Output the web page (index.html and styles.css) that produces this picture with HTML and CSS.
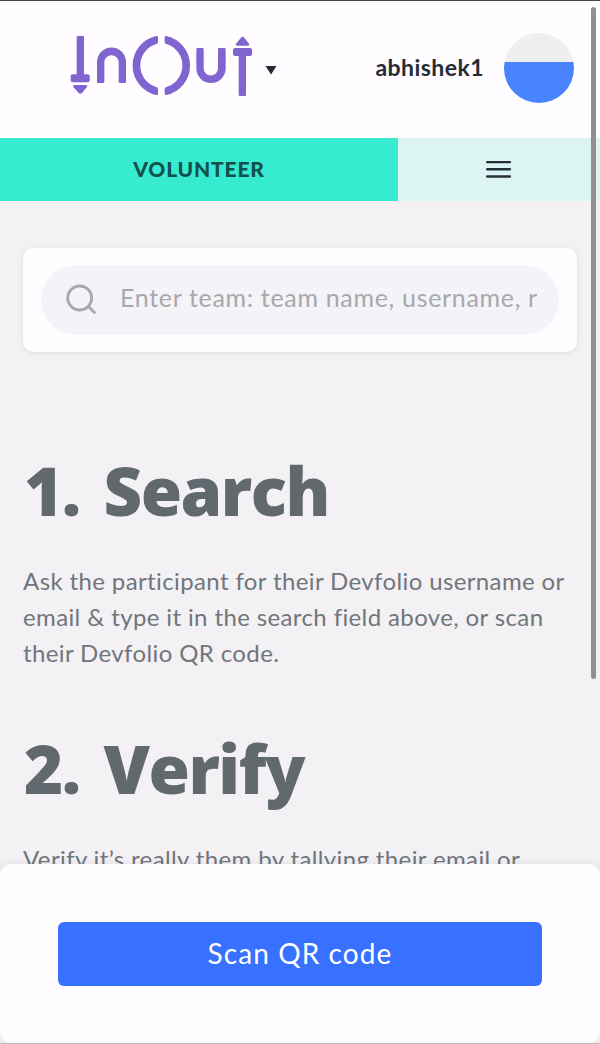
FILE: index.html
```html
<!DOCTYPE html>
<html lang="en">
<head>
<meta charset="utf-8">
<title>InOut – Volunteer</title>
<link rel="stylesheet" href="styles.css">
</head>
<body>
<div class="app">
  <header class="header">
    <div class="brand">
      <svg class="logo" viewBox="30 30 552 186" aria-label="InOut">
        <g fill="#8064cf">
          <rect x="50" y="33" width="22" height="121" rx="4"/>
          <rect x="32" y="148" width="57" height="24" rx="6"/>
          <path d="M43 180h35q6 1 3 6L66 204q-5 5-10 0L40 186q-3-5 3-6z"/>
          <path d="M111 170v-59a43 43 0 0 1 87 0v59q0 4-4 4h-14q-4 0-4-4v-58a21 21 0 0 0-43 0v58q0 4-4 4h-14q-4 0-4-4z"/>
          <path d="M294 37v14q0 5-5 6a67.3 67.3 0 0 0 0 129q5 1 5 6v14q0 5-5 4a90.6 90.6 0 0 1 0-177q5-1 5 4z"/>
          <path d="M314 37v14q0 5 5 6a67.3 67.3 0 0 1 0 129q-5 1-5 6v14q0 5 5 4a90.6 90.6 0 0 0 0-177q-5-1-5 4z"/>
          <path d="M409 73v57a43 43 0 0 0 88 0v-57q0-4-4-4h-15q-4 0-4 4v57a21 21 0 0 1-43 0v-57q0-4-4-4h-14q-4 0-4 4z"/>
          <rect x="519" y="69" width="57" height="24" rx="6"/>
          <rect x="536" y="85" width="22" height="128" rx="4"/>
          <path d="M531 62h34q5-1 2-6l-14-18q-5-6-10 0l-15 18q-3 5 3 6z"/>
        </g>
      </svg>
      <svg class="caret" viewBox="0 0 12 10"><path d="M0.5 1h11L6 9.5z" fill="#242b33"/></svg>
    </div>
    <div class="account">
      <span class="username">abhishek1</span>
      <span class="avatar"></span>
    </div>
  </header>
  <nav class="tabs">
    <div class="tab-active"><span class="tab-label">VOLUNTEER</span></div>
    <div class="tab-menu">
      <svg class="menu-icon" viewBox="0 0 26 20"><path d="M1.2 2.1h22.7M1.2 9.3h22.7M1.2 16.5h22.7" stroke="#242e38" stroke-width="2.4" stroke-linecap="round"/></svg>
    </div>
  </nav>
  <main class="content">
    <div class="search-card">
      <div class="search-field">
        <svg class="search-icon" viewBox="0 0 32 32" fill="none" stroke="#a9a8aa" stroke-width="2.8" stroke-linecap="round"><circle cx="13.7" cy="14" r="12"/><path d="M22.5 22.5l6 6"/></svg>
        <div class="placeholder">Enter team: team name, username, r</div>
      </div>
    </div>
    <section class="step">
      <h2 class="step-title">1. Search</h2>
      <p class="step-text">Ask the participant for their Devfolio username or<br>email &amp; type it in the search field above, or scan<br>their Devfolio QR code.</p>
    </section>
    <section class="step">
      <h2 class="step-title">2. Verify</h2>
      <p class="step-text">Verify it’s really them by tallying their email or</p>
    </section>
  </main>
  <footer class="sheet"><div class="scan-button"><span class="scan-label">Scan QR code</span></div></footer>
  <div class="scrollbar"></div>
</div>
</body>
</html>
```
FILE: styles.css
```css
* { box-sizing: border-box; }
body { margin: 0; font-family: Lato, "Open Sans", sans-serif; background: #f3f1f4; }
svg { display: block; flex: none; }
.app { position: relative; height: 1044px; overflow: hidden; display: flex; flex-direction: column; border-top: 1px solid #49474b; border-bottom: 1px solid #bdbcbf; }
.header { flex: none; height: 137px; padding: 0 26px 0 70px; display: flex; justify-content: space-between; align-items: flex-start; background: #fffdff; }
.brand { display: flex; padding-top: 34px; }
.logo { width: 184px; height: 62px; }
.caret { width: 12px; height: 10px; margin: 30px 0 0 11px; }
.account { display: flex; align-items: center; gap: 20px; padding-top: 32px; }
.username { font-size: 23px; font-weight: 700; line-height: 30px; padding-bottom: 3px; color: #252c36; letter-spacing: .45px; white-space: nowrap; }
.avatar { width: 70px; height: 70px; border-radius: 50%; background: linear-gradient(#efeef1 28.5px, #4983fe 29px); }
.tabs { flex: none; height: 63px; display: flex; }
.tab-active { width: 398px; background: #37ebd0; color: #12504d; display: flex; align-items: center; justify-content: center; font-size: 21px; font-weight: 900; letter-spacing: .8px; padding-bottom: 2px; }
.tab-menu { flex: 1; background: #dcf5f2; display: flex; align-items: center; justify-content: center; }
.menu-icon { width: 26px; height: 20px; }
.content { flex: 1; min-height: 0; overflow: hidden; padding: 47px 23px 0; }
.search-card { height: 104px; padding: 17px 18px; border-radius: 11px; background: #fffdff; box-shadow: 0 1px 5px rgba(40, 35, 50, .1); }
.search-field { height: 70px; border-radius: 35px; background: #f4f3f7; display: flex; align-items: center; padding: 0 18px 0 25px; }
.search-icon { width: 32px; height: 32px; }
.placeholder { margin-left: 22px; flex: 1; white-space: nowrap; font-size: 25px; line-height: 40px; padding-bottom: 7px; color: #a9a8ab; letter-spacing: .68px; }
.step { height: 278px; }
.search-card + .step { margin-top: 98px; }
.step-title { margin: 0; padding-left: 1px; height: 90px; font-family: "Open Sans", sans-serif; font-size: 67px; line-height: 81px; font-weight: 800; color: #61696f; white-space: nowrap; letter-spacing: -1.5px; word-spacing: 8px; }
.step-text { margin: 23px 0 0; font-size: 24px; line-height: 36px; color: #70767b; white-space: nowrap; letter-spacing: .38px; }
.sheet { flex: none; height: 179px; border-radius: 12px; background: #fffdff; padding: 58px 58px 0; box-shadow: 0 -1px 6px rgba(40, 35, 50, .07); }
.scan-button { height: 64px; border-radius: 6px; background: #3870ff; color: #fff; font-size: 28px; letter-spacing: 1.1px; padding-bottom: 2px; display: flex; align-items: center; justify-content: center; }
.scrollbar { position: absolute; top: 6px; right: 4px; width: 5px; height: 672px; border-radius: 3px; background: #909092; }
```
